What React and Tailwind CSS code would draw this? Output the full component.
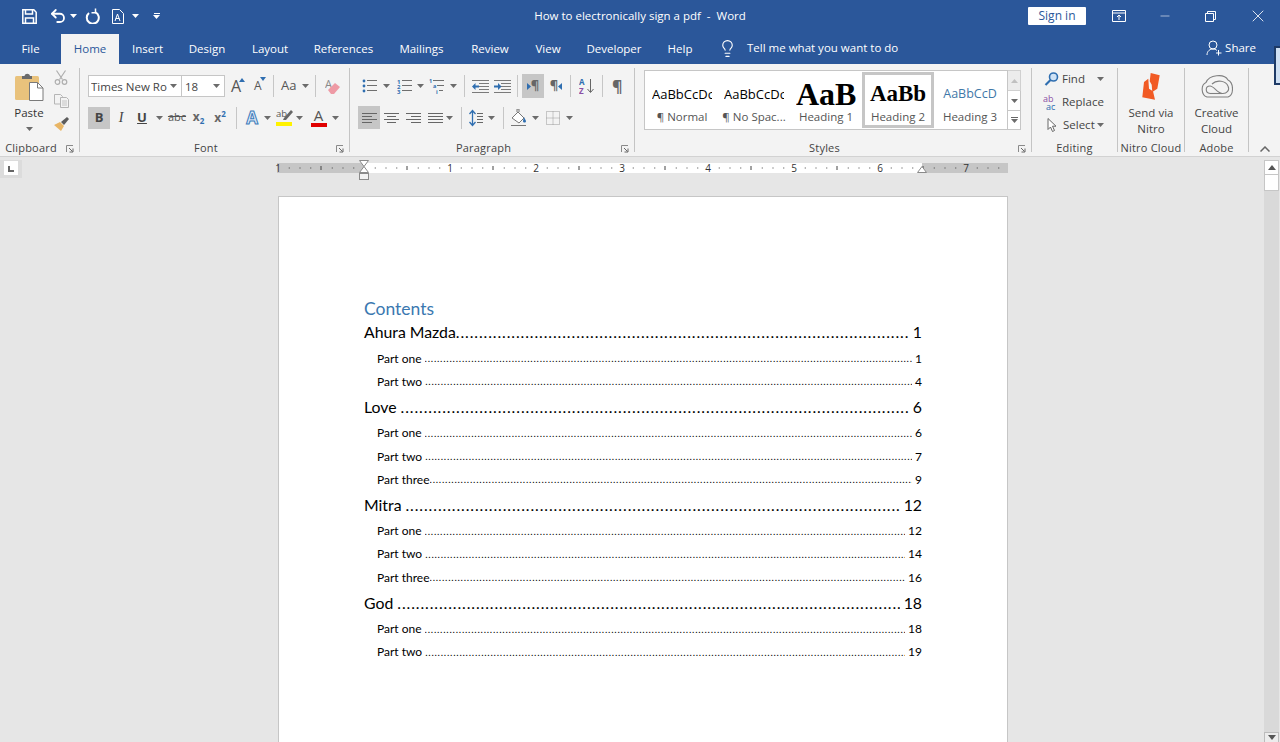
import { Undo2, Lightbulb, X, Minus } from 'lucide-react'

const tabs = [
  { name: 'File', w: 'w-[61px]' },
  { name: 'Home', w: 'w-[58px]', active: true },
  { name: 'Insert', w: 'w-[57px]' },
  { name: 'Design', w: 'w-[62px]' },
  { name: 'Layout', w: 'w-[64px]' },
  { name: 'References', w: 'w-[83px]' },
  { name: 'Mailings', w: 'w-[73px]' },
  { name: 'Review', w: 'w-[64px]' },
  { name: 'View', w: 'w-[52px]' },
  { name: 'Developer', w: 'w-[80px]' },
  { name: 'Help', w: 'w-[52px]' },
]

const toc = [
  { level: 1, title: 'Ahura Mazda', page: 1 },
  { level: 2, title: 'Part one', page: 1 },
  { level: 2, title: 'Part two', page: 4 },
  { level: 1, title: 'Love', page: 6 },
  { level: 2, title: 'Part one', page: 6 },
  { level: 2, title: 'Part two', page: 7 },
  { level: 2, title: 'Part three', page: 9 },
  { level: 1, title: 'Mitra', page: 12 },
  { level: 2, title: 'Part one', page: 12 },
  { level: 2, title: 'Part two', page: 14 },
  { level: 2, title: 'Part three', page: 16 },
  { level: 1, title: 'God', page: 18 },
  { level: 2, title: 'Part one', page: 18 },
  { level: 2, title: 'Part two', page: 19 },
]

const styles = [
  { label: '¶ Normal', sample: 'AaBbCcDc', cls: 'text-[13px] text-left text-black', frame: 'border-transparent' },
  { label: '¶ No Spac...', sample: 'AaBbCcDc', cls: 'text-[13px] text-left text-black', frame: 'border-transparent' },
  { label: 'Heading 1', sample: 'AaB', cls: "text-[32px] text-center font-bold text-black font-['Liberation_Serif',serif]", frame: 'border-transparent' },
  { label: 'Heading 2', sample: 'AaBb', cls: "text-[23px] text-center font-bold text-black font-['Liberation_Serif',serif]", frame: 'border-[#c6c6c6]' },
  { label: 'Heading 3', sample: 'AaBbCcD', cls: 'text-[12.5px] text-center text-[#3f78a8]', frame: 'border-transparent' },
]

const DOTS = '.'.repeat(260)

function Caret({ color = '#6b6b6b' }) {
  return (
    <svg width="7" height="4" viewBox="0 0 7 4" className="shrink-0">
      <path d="M0 0h7L3.5 4z" fill={color} />
    </svg>
  )
}

function Launcher() {
  return (
    <svg width="8" height="8" viewBox="0 0 8 8" className="absolute right-[5px] top-[4px]">
      <path d="M.5 7V.5H7" stroke="#8a8a8a" fill="none" />
      <path d="M3 3l3.5 3.5M7 3.5V7H3.5" stroke="#666" fill="none" />
    </svg>
  )
}

function Sep() {
  return <div className="w-px h-[84px] bg-[#c4c4c4] shrink-0" />
}

function VBar({ className = '' }) {
  return <div className={`w-px h-[22px] bg-[#c6c6c6] shrink-0 ${className}`} />
}

function Label({ text, launcher }) {
  return (
    <div className={`relative h-[14px] leading-[14px] text-[11px] text-[#444] text-center whitespace-nowrap tracking-[0.2px] ${launcher ? 'pr-[17px]' : ''}`}>
      {text}
      {launcher && <Launcher />}
    </div>
  )
}

function Lines({ x = 0, ys, w = 12, color = '#6f6f6f' }) {
  return ys.map((y) => <path key={y} d={`M${x} ${y}.5h${w}`} stroke={color} />)
}

function Align({ kind }) {
  const rows = {
    left: ['M1 2.5h15', 'M1 5.5h10', 'M1 8.5h15', 'M1 11.5h10'],
    center: ['M1 2.5h15', 'M4 5.5h9', 'M1 8.5h15', 'M4 11.5h9'],
    right: ['M1 2.5h15', 'M6 5.5h10', 'M1 8.5h15', 'M6 11.5h10'],
    justify: ['M1 2.5h15', 'M1 5.5h15', 'M1 8.5h15', 'M1 11.5h15'],
  }[kind]
  return (
    <svg width="17" height="14" viewBox="0 0 17 14">
      {rows.map((d) => <path key={d} d={d} stroke="#666" />)}
    </svg>
  )
}

function Bullets() {
  return (
    <svg width="16" height="16" viewBox="0 0 16 16" className="shrink-0">
      <circle cx="2" cy="3" r="1.4" fill="#2f6eb0" />
      <circle cx="2" cy="8" r="1.4" fill="#2f6eb0" />
      <circle cx="2" cy="13" r="1.4" fill="#2f6eb0" />
      <Lines x={5} ys={[2, 7, 12]} w={10} />
    </svg>
  )
}

function Numbering() {
  return (
    <svg width="16" height="16" viewBox="0 0 16 16" className="block">
      <text x="0" y="5.5" fontSize="6" fontWeight="700" fill="#2f6eb0">1</text>
      <text x="0" y="10.5" fontSize="6" fontWeight="700" fill="#2f6eb0">2</text>
      <text x="0" y="15.5" fontSize="6" fontWeight="700" fill="#2f6eb0">3</text>
      <Lines x={5} ys={[2, 7, 12]} w={10} />
    </svg>
  )
}

function Multilevel() {
  return (
    <svg width="16" height="16" viewBox="0 0 16 16" className="block">
      <text x="0" y="5" fontSize="5.5" fontWeight="700" fill="#2f6eb0">1</text>
      <text x="4" y="10" fontSize="5.5" fontWeight="700" fill="#2f6eb0">a</text>
      <text x="7" y="15.5" fontSize="5.5" fontWeight="700" fill="#2f6eb0">i</text>
      <Lines x={4} ys={[2]} w={11} />
      <Lines x={8} ys={[7]} w={7} />
      <Lines x={10} ys={[12]} w={4} />
    </svg>
  )
}

function Indent({ flip }) {
  return (
    <svg width="17" height="14" viewBox="0 0 17 14" className="block">
      <path d="M0 1.5h17M7 4.5h10M7 7.5h10M7 10.5h10M0 13.5h17" stroke="#7a7a7a" />
      {flip ? (
        <path d="M0 6.5h4V4l3.5 3.5L4 11V8.5H0z" fill="#2f6eb0" />
      ) : (
        <path d="M7 6.5H3.5V4L0 7.5 3.5 11V8.5H7z" fill="#2f6eb0" />
      )}
    </svg>
  )
}

function Ruler() {
  const ticks = []
  for (let i = 0; i < 68; i++) {
    const x = 1 + i * 10.75
    if (i % 8 === 0) continue
    if (i % 4 === 0) ticks.push(<path key={i} d={`M${x} 9v4`} stroke="#444" />)
    else ticks.push(<rect key={i} x={x} y="10.5" width="1" height="1" fill="#444" />)
  }
  const nums = [
    { n: 1, x: 1 },
    { n: 1, x: 173 },
    { n: 2, x: 259 },
    { n: 3, x: 345 },
    { n: 4, x: 431 },
    { n: 5, x: 517 },
    { n: 6, x: 603 },
    { n: 7, x: 689 },
  ]
  return (
    <svg width="732" height="26" viewBox="0 0 732 26" className="block overflow-visible">
      <rect x="0" y="6" width="731" height="10" fill="#c6c6c6" />
      <rect x="87" y="6" width="558" height="10" fill="#fff" />
      {ticks}
      {nums.map((item) => (
        <text key={item.x} x={item.x} y="14.5" fontSize="10" fill="#333" textAnchor="middle" fontFamily="Open Sans, sans-serif">{item.n}</text>
      ))}
      <path d="M82.5 3.5h9L87 9.5zM87 9.5l4.5 6h-9z" fill="#fff" stroke="#8a8a8a" />
      <rect x="82.5" y="16.5" width="9" height="6" fill="#f2f2f2" stroke="#8a8a8a" />
      <path d="M645 9.5l4.5 6h-9z" fill="#fff" stroke="#8a8a8a" />
    </svg>
  )
}

function Clipboard() {
  return (
    <div className="flex h-full">
      <div className="w-[50px] ml-[4px] flex flex-col items-center pt-[5px]">
        <svg width="29" height="28" viewBox="0 0 29 28">
          <rect x="0" y="3" width="24" height="24" rx="1.5" fill="#e9c27c" />
          <path d="M7 3h2.5c.5-3 5-3 5.500 0H17v3H7z" fill="#6a6a6a" />
          <path d="M14.500 9.500h8l5.500 5.500v12.500H14.500z" fill="#fff" stroke="#7a7a7a" />
          <path d="M22.500 9.500V15H28" fill="none" stroke="#7a7a7a" />
        </svg>
        <div className="text-[11.5px] leading-[16px] text-[#333] mt-[4px]">Paste</div>
        <div className="mt-[6px]"><Caret /></div>
      </div>
      <div className="w-[14px] flex flex-col pt-[2px]">
        <svg width="14" height="15" viewBox="0 0 14 15">
          <path d="M2.500 0.500l6 9M11.500 0.500l-6 9" stroke="#aeaeae" strokeWidth="1.200" />
          <circle cx="3.500" cy="12" r="2.300" fill="none" stroke="#aeaeae" strokeWidth="1.200" />
          <circle cx="10.500" cy="12" r="2.300" fill="none" stroke="#aeaeae" strokeWidth="1.200" />
        </svg>
        <svg width="15" height="14" viewBox="0 0 15 14" className="mt-[9px]">
          <path d="M.5.5h6l2 2V10H.5z" fill="#f3f3f3" stroke="#b5b5b5" />
          <path d="M6.500 3.500h6l2 2v8h-8z" fill="#f3f3f3" stroke="#b5b5b5" />
          <path d="M8 7h5M8 9h5M8 11h5" stroke="#c4c4c4" />
        </svg>
        <svg width="15" height="14" viewBox="0 0 15 14" className="mt-[9px]">
          <path d="M0 8l6-3 4 4-3 5z" fill="#e8b565" />
          <path d="M7 5l6-5 2 2-5 6z" fill="#5c5c5c" />
        </svg>
      </div>
    </div>
  )
}

function FontGroup() {
  return (
    <div className="pt-[7px] pl-[8px] text-[#444]">
      <div className="flex items-center h-[22px]">
        <div className="w-[94px] h-[22px] bg-white border border-[#c6c6c6] flex items-center pl-[2px] pr-[4px] justify-between">
          <span className="text-[11.5px] pt-[1px] text-[#444] whitespace-nowrap overflow-hidden">Times New Ro</span>
          <Caret />
        </div>
        <div className="w-[43px] h-[22px] bg-white border border-l-0 border-[#c6c6c6] flex items-center pl-[3px] pr-[4px] justify-between">
          <span className="text-[11.5px] pt-[1px]">18</span>
          <Caret />
        </div>
        <div className="w-[14px] ml-[6px] relative text-[16px] text-[#555] leading-[24px]">
          A
          <svg width="6" height="4" viewBox="0 0 6 4" className="absolute right-0 top-[4px]"><path d="M0 4h6L3 0z" fill="#2f6eb0" /></svg>
        </div>
        <div className="w-[12px] ml-[9px] relative text-[12px] text-[#555] leading-[26px]">
          A
          <svg width="6" height="4" viewBox="0 0 6 4" className="absolute right-0 top-[4px]"><path d="M0 0h6L3 4z" fill="#2f6eb0" /></svg>
        </div>
        <VBar className="ml-[7px]" />
        <span className="ml-[7px] w-[17px] text-[13px] text-[#555]">Aa</span>
        <span className="ml-[4px]"><Caret /></span>
        <VBar className="ml-[6px]" />
        <svg width="16" height="17" viewBox="0 0 16 17" className="ml-[9px]">
          <text x="0" y="10" fontSize="11" fill="#8a8a8a">A</text>
          <path d="M3 12l7-7 5 4-6 7H6z" fill="#ee9aa5" />
        </svg>
      </div>
      <div className="flex items-center h-[23px] mt-[9px]">
        <div className="w-[22px] h-[22px] bg-[#c6c6c6] flex items-center justify-center text-[13px] font-bold text-[#444]">B</div>
        <div className="w-[22px] text-center text-[14px] italic font-['Liberation_Serif',serif] text-[#444]">I</div>
        <div className="w-[20px] text-center text-[13px] font-bold underline text-[#444]">U</div>
        <div className="w-[14px] flex justify-center"><Caret /></div>
        <div className="w-[22px] text-center text-[11px] line-through text-[#555]">abc</div>
        <div className="w-[21px] text-center text-[12px] font-bold text-[#666]">x<span className="text-[8px] text-[#2f6eb0] align-sub">2</span></div>
        <div className="w-[22px] text-center text-[12px] font-bold text-[#666]">x<span className="text-[8px] text-[#2f6eb0] align-super">2</span></div>
        <VBar className="ml-[5px]" />
        <div className="w-[22px] ml-[4px] text-center text-[17px] font-bold leading-[22px] text-[#dce9f7] [-webkit-text-stroke:1px_#3d7cba]">A</div>
        <span className="ml-[1px]"><Caret /></span>
        <div className="w-[18px] ml-[4px] h-[20px] flex flex-col items-center">
          <svg width="17" height="13" viewBox="0 0 17 13">
            <text x="0" y="9" fontSize="9.500" fill="#555">ab</text>
            <path d="M8 10l7-8 2 2-7 8H7z" fill="#666" />
          </svg>
          <div className="w-[16px] h-[4px] mt-[1px] bg-[#fff200]" />
        </div>
        <span className="ml-[3px]"><Caret /></span>
        <div className="w-[17px] ml-[7px] h-[20px] flex flex-col items-center">
          <div className="text-[15px] leading-[15px] text-[#555]">A</div>
          <div className="w-[16px] h-[4px] bg-[#e00000]" />
        </div>
        <span className="ml-[5px]"><Caret /></span>
      </div>
    </div>
  )
}

function ParagraphGroup() {
  return (
    <div className="pt-[6px] pl-[8px]">
      <div className="flex items-center h-[24px] pl-[4px]">
        <Bullets />
        <span className="ml-[5px]"><Caret /></span>
        <span className="ml-[7px]"><Numbering /></span>
        <span className="ml-[4px]"><Caret /></span>
        <span className="ml-[5px]"><Multilevel /></span>
        <span className="ml-[5px]"><Caret /></span>
        <VBar className="ml-[7px]" />
        <span className="ml-[7px]"><Indent /></span>
        <span className="ml-[5px]"><Indent flip /></span>
        <VBar className="ml-[6px]" />
        <div className="w-[22px] h-[24px] ml-[4px] shrink-0 bg-[#c6c6c6] flex items-center justify-center text-[13px] font-bold text-[#666]">
          <svg width="4" height="7" viewBox="0 0 4 7"><path d="M0 0l4 3.500L0 7z" fill="#2f6eb0" /></svg>¶
        </div>
        <div className="w-[22px] ml-[1px] shrink-0 flex items-center justify-center text-[13px] font-bold text-[#666]">
          ¶<svg width="4" height="7" viewBox="0 0 4 7"><path d="M4 0L0 3.500 4 7z" fill="#2f6eb0" /></svg>
        </div>
        <VBar className="ml-[3px]" />
        <svg width="16" height="16" viewBox="0 0 16 16" className="ml-[8px] shrink-0">
          <text x="0" y="7" fontSize="8" fontWeight="700" fill="#2f6eb0">A</text>
          <text x="0" y="15.500" fontSize="8" fontWeight="700" fill="#8a4fa5">Z</text>
          <path d="M11.500 1v13M8.500 11l3 3.500 3-3.500" stroke="#666" fill="none" />
        </svg>
        <VBar className="ml-[7px]" />
        <span className="ml-[9px] text-[16px] font-bold text-[#666]">¶</span>
      </div>
      <div className="flex items-center h-[23px] mt-[8px]">
        <div className="w-[22px] h-[23px] bg-[#c6c6c6] flex items-center justify-center"><Align kind="left" /></div>
        <div className="w-[22px] flex justify-center"><Align kind="center" /></div>
        <div className="w-[22px] flex justify-center"><Align kind="right" /></div>
        <div className="w-[22px] flex justify-center"><Align kind="justify" /></div>
        <Caret />
        <VBar className="ml-[8px]" />
        <svg width="14" height="18" viewBox="0 0 14 18" className="ml-[7px] shrink-0">
          <path d="M3.500 2v14M0.500 5l3-3.500 3 3.500M0.500 13l3 3.500 3-3.500" stroke="#2f6eb0" fill="none" strokeWidth="1.300" />
          <path d="M8 4.500h6M8 7.500h6M8 10.500h6M8 13.500h6" stroke="#666" />
        </svg>
        <span className="ml-[5px]"><Caret /></span>
        <VBar className="ml-[8px]" />
        <svg width="17" height="17" viewBox="0 0 17 17" className="ml-[7px] shrink-0">
          <path d="M1 9l6-6 6 6-5 5z" fill="#fff" stroke="#777" />
          <path d="M6 3V0h2v3" stroke="#777" fill="none" />
          <path d="M13 8l2 4c0 2-3 2-3 0z" fill="#2f6eb0" />
          <path d="M0 16.500h15" stroke="#777" />
        </svg>
        <span className="ml-[4px]"><Caret /></span>
        <svg width="14" height="14" viewBox="0 0 14 14" className="ml-[7px] shrink-0">
          <path d="M.5.500h13v13H.5zM7 .500v13M.5 7h13" stroke="#999" fill="none" strokeDasharray="1 1" />
        </svg>
        <span className="ml-[6px]"><Caret /></span>
      </div>
    </div>
  )
}

function StylesGroup() {
  return (
    <div className="pt-[2px] pl-[9px] flex">
      <div className="w-[364px] h-[60px] bg-white border border-[#c6c6c6] flex items-center p-[1px]">
        {styles.map((s) => (
          <div key={s.label} className={`w-[72px] h-[56px] border-[3px] flex flex-col items-center ${s.frame}`}>
            <div className={`w-[60px] h-[33px] leading-[38px] overflow-hidden whitespace-nowrap ${s.cls}`}>{s.sample}</div>
            <div className="text-[11.5px] text-[#555] leading-[16px] whitespace-nowrap mt-[1px]">{s.label}</div>
          </div>
        ))}
      </div>
      <div className="w-[13px] h-[60px] flex flex-col">
        <div className="h-[21px] border border-l-0 border-[#d0d0d0] bg-[#ececec] flex items-center justify-center"><svg width="7" height="4" viewBox="0 0 7 4"><path d="M0 4h7L3.500 0z" fill="#c0c0c0" /></svg></div>
        <div className="h-[19px] border-r border-[#c6c6c6] bg-white flex items-center justify-center"><Caret /></div>
        <div className="h-[20px] border border-l-0 border-[#c6c6c6] bg-white flex flex-col items-center justify-center gap-[1px]"><div className="w-[7px] h-px bg-[#666]" /><Caret /></div>
      </div>
    </div>
  )
}

function EditingGroup() {
  return (
    <div className="flex flex-col gap-[3px] pt-[1px] text-[11.5px] text-[#444]">
      <div className="h-[20px] flex items-center pl-[12px]">
        <svg width="15" height="14" viewBox="0 0 15 14">
          <circle cx="9.500" cy="5" r="4" fill="#cfe2f5" stroke="#2f6eb0" strokeWidth="1.600" />
          <path d="M6.500 8l-5 5" stroke="#2f6eb0" strokeWidth="2.200" />
        </svg>
        <span className="ml-[3px] w-[35px]">Find</span>
        <Caret />
      </div>
      <div className="h-[20px] flex items-center pl-[11px]">
        <svg width="16" height="16" viewBox="0 0 16 16">
          <text x="0" y="7.500" fontSize="9" fill="#8a4fa5">ab</text>
          <text x="3" y="15.500" fontSize="9" fill="#2f6eb0">ac</text>
        </svg>
        <span className="ml-[3px]">Replace</span>
      </div>
      <div className="h-[20px] flex items-center pl-[15px]">
        <svg width="10" height="15" viewBox="0 0 10 15">
          <path d="M1 .5v11l2.500-2.500 2 4.500 2-1-2-4.300H9z" fill="#fff" stroke="#666" />
        </svg>
        <span className="ml-[6px]">Select</span>
        <span className="ml-[2px]"><Caret /></span>
      </div>
    </div>
  )
}

function NitroGroup() {
  return (
    <div className="flex flex-col items-center pt-[5px] text-[11.5px] leading-[16px] text-[#444]">
      <svg width="21" height="27" viewBox="0 0 21 27" className="-mb-px">
        <path d="M1.300 24.300L3 9l4.300-3.300.7 10 4 2.600 2 8.400z" fill="#f15a24" />
        <path d="M9.700 0l9 2.300-2.400 13.400-5 3.300-.6-7.300-2-3.400z" fill="#f15a24" />
      </svg>
      <div className="mt-[6px] whitespace-nowrap">Send via</div>
      <div>Nitro</div>
    </div>
  )
}

function AdobeGroup() {
  return (
    <div className="flex flex-col items-center pt-[6px] text-[11.5px] leading-[16px] text-[#444]">
      <svg width="32" height="25" viewBox="0 0 32 25" fill="none" stroke="#808080" strokeWidth="1.100">
        <path d="M6 23C0 21-.5 11 5 8.500 8 1 23-1 27 6c6 3 6 15 0 17z" />
        <path d="M9 19.500C4 19 4 12 9 12c4 0 7 7 12 7.500 5 .5 8-3.500 6-7.500C25 7 16 5 11 10" />
        <path d="M9 19.500h12" />
      </svg>
      <div className="mt-[6px] whitespace-nowrap">Creative</div>
      <div>Cloud</div>
    </div>
  )
}

function TocRow({ level, title, page }) {
  if (level === 1) {
    return (
      <div className="flex h-[26px] mb-[2px] items-center text-[15.8px] text-black">
        <span className="whitespace-nowrap">{title}</span>
        <span className={`flex-1 overflow-hidden whitespace-nowrap tracking-[0.9px] ${title === 'Ahura Mazda' ? '' : 'ml-[4px]'}`}>{DOTS}</span>
        <span className="ml-[4px]">{page}</span>
      </div>
    )
  }
  return (
    <div className="flex h-[23.3px] items-center pl-[13px] text-[12px] text-black">
      <span className="whitespace-nowrap">{title}</span>
      <span className={`flex-1 overflow-hidden whitespace-nowrap text-[10px] tracking-[0.75px] ${title === 'Part three' ? '' : 'ml-[3px]'}`}>{DOTS}</span>
      <span className="ml-[3px]">{page}</span>
    </div>
  )
}

export default function App() {
  return (
    <div className="w-[1280px] h-[742px] overflow-hidden flex flex-col relative bg-[#e6e6e6] font-['Open_Sans',sans-serif]">
      {/* title bar */}
      <div className="h-[32px] bg-[#2b579a] flex items-center text-white shrink-0">
        <div className="w-[420px] flex items-center pl-[22px]">
          <svg width="15" height="15" viewBox="0 0 15 15" fill="none" stroke="#fff" strokeWidth="1.500">
            <path d="M.8.800h11l2.400 2.400v11H.8z" />
            <path d="M3.500 1v4h7V1M3.500 14V9h8v5" />
          </svg>
          <Undo2 size={18} strokeWidth={2.4} className="ml-[12px]" />
          <span className="ml-[3px]"><Caret color="#fff" /></span>
          <svg width="16" height="16" viewBox="0 0 16 16" className="ml-[8px]" fill="none" stroke="#fff" strokeWidth="2">
            <path d="M10.500 4.300A6 6 0 1 1 4 5" />
            <path d="M10.500 .5V4.800H6.500" strokeWidth="1.500" />
          </svg>
          <svg width="12" height="15" viewBox="0 0 12 15" className="ml-[11px]" fill="none" stroke="#fff">
            <path d="M.5.500h7l4 4v10H.5z" />
            <path d="M3 12l2.500-7L8 12M3.800 9.500h3.500" />
          </svg>
          <span className="ml-[8px]"><Caret color="#fff" /></span>
          <div className="ml-[14px] flex flex-col items-center gap-[1px]"><div className="w-[6px] h-px bg-white" /><Caret color="#fff" /></div>
        </div>
        <div className="w-[440px] text-center text-[11.5px] whitespace-pre">How to electronically sign a pdf  -  Word</div>
        <div className="w-[420px] flex items-center">
          <div className="w-[58px] h-[18px] ml-[168px] bg-white rounded-[1px] text-[#2b579a] text-[12px] leading-[18px] text-center">Sign in</div>
          <svg width="14" height="12" viewBox="0 0 14 12" className="ml-[26px]" fill="none" stroke="#fff">
            <path d="M.5.500h13v11H.5zM.5 3h13M7 10V5M5 7l2-2 2 2" />
          </svg>
          <Minus size={14} strokeWidth={1} className="ml-[32px]" />
          <svg width="11" height="11" viewBox="0 0 11 11" className="ml-[33px]" fill="none" stroke="#fff">
            <path d="M.5 2.500h8v8h-8zM2.500 2.500v-2h8v8h-2" />
          </svg>
          <X size={20} strokeWidth={1} className="ml-[32px]" />
        </div>
      </div>

      {/* tabs */}
      <div className="h-[32px] bg-[#2b579a] flex text-[11.5px] text-white shrink-0">
        {tabs.map((t) => (
          <div key={t.name} className={`${t.w} mt-[2px] h-[30px] flex items-center justify-center ${t.active ? 'bg-[#f3f3f3] text-[#2b579a]' : ''}`}>
            {t.name}
          </div>
        ))}
        <div className="ml-[12px] flex items-center">
          <Lightbulb size={19} strokeWidth={1.4} />
          <span className="ml-[10px] whitespace-nowrap">Tell me what you want to do</span>
        </div>
        <div className="ml-auto mr-[24px] flex items-center">
          <svg width="16" height="16" viewBox="0 0 16 16" fill="none" stroke="#fff">
            <circle cx="7" cy="5" r="4" />
            <path d="M1 15c0-4 3-6 6-6 1.500 0 3 .500 4 1.500M12.500 10v5.500M10 13h5.500" />
          </svg>
          <span className="ml-[3px]">Share</span>
        </div>
      </div>

      {/* ribbon */}
      <div className="h-[93px] bg-[#f3f3f3] border-b border-[#d2d2d2] flex items-start pt-[4px] shrink-0">
        <div className="w-[79px] h-[87px] flex flex-col">
          <div className="h-[73px]"><Clipboard /></div>
          <Label text="Clipboard" launcher />
        </div>
        <Sep />
        <div className="w-[269px] h-[87px] flex flex-col">
          <div className="h-[73px]"><FontGroup /></div>
          <Label text="Font" launcher />
        </div>
        <Sep />
        <div className="w-[284px] h-[87px] flex flex-col">
          <div className="h-[73px]"><ParagraphGroup /></div>
          <Label text="Paragraph" launcher />
        </div>
        <Sep />
        <div className="w-[396px] h-[87px] flex flex-col">
          <div className="h-[73px]"><StylesGroup /></div>
          <Label text="Styles" launcher />
        </div>
        <Sep />
        <div className="w-[85px] h-[87px] flex flex-col">
          <div className="h-[73px]"><EditingGroup /></div>
          <Label text="Editing" />
        </div>
        <Sep />
        <div className="w-[66px] h-[87px] flex flex-col">
          <div className="h-[73px]"><NitroGroup /></div>
          <Label text="Nitro Cloud" />
        </div>
        <Sep />
        <div className="w-[63px] h-[87px] flex flex-col">
          <div className="h-[73px]"><AdobeGroup /></div>
          <Label text="Adobe" />
        </div>
        <Sep />
        <div className="flex-1 h-[87px] flex items-end justify-center pb-[3px]">
          <svg width="10" height="6" viewBox="0 0 10 6" fill="none" stroke="#666" strokeWidth="1.500"><path d="M.5 5.500L5 1l4.500 4.500" /></svg>
        </div>
      </div>

      {/* work area */}
      <div className="flex-1 flex min-h-0">
        <div className="w-[277px] shrink-0 pt-[3px]">
          <div className="w-[22px] h-[18px] bg-[#dcdcdc] pl-[4px] pt-[1px]">
            <div className="w-[14px] h-[14px] bg-white flex items-end pl-[4px] pb-[3px]">
              <div className="w-[6px] h-[6px] border-l-2 border-b-2 border-[#666]" />
            </div>
          </div>
        </div>
        <div className="w-[732px] shrink-0">
          <Ruler />
          <div className="ml-px mt-[13px] w-[730px] h-[700px] bg-white border border-[#c6c6c6] pt-[101px] pl-[85px] pr-[85px]">
            <div className="font-['Lato',sans-serif] text-[17.5px] leading-[21px] text-[#3a78b0]">Contents</div>
            <div className="font-['Lato',sans-serif]">
              {toc.map((row, i) => (
                <TocRow key={i} {...row} />
              ))}
            </div>
          </div>
        </div>
        <div className="ml-auto mr-px w-[15px] shrink-0 pt-[3px] flex flex-col">
          <div className="h-[15px] bg-white border border-[#c6c6c6] flex items-center justify-center">
            <svg width="8" height="5" viewBox="0 0 8 5"><path d="M0 5h8L4 0z" fill="#555" /></svg>
          </div>
          <div className="h-[16px] bg-white border border-t-0 border-[#c6c6c6]" />
          <div className="flex-1 bg-[#d9d9d9]" />
          <div className="h-[10px] bg-[#ececec] border border-b-0 border-[#bcbcbc] flex items-center justify-center">
            <svg width="8" height="5" viewBox="0 0 8 5"><path d="M0 0h8L4 5z" fill="#555" /></svg>
          </div>
        </div>
      </div>

      {/* side handle peeking in at the window edge */}
      <div className="absolute left-[1274px] top-[46px] w-[6px] h-[39px] bg-[#cfe0f3] border-2 border-r-0 border-[#1e3a66]" />
    </div>
  )
}
